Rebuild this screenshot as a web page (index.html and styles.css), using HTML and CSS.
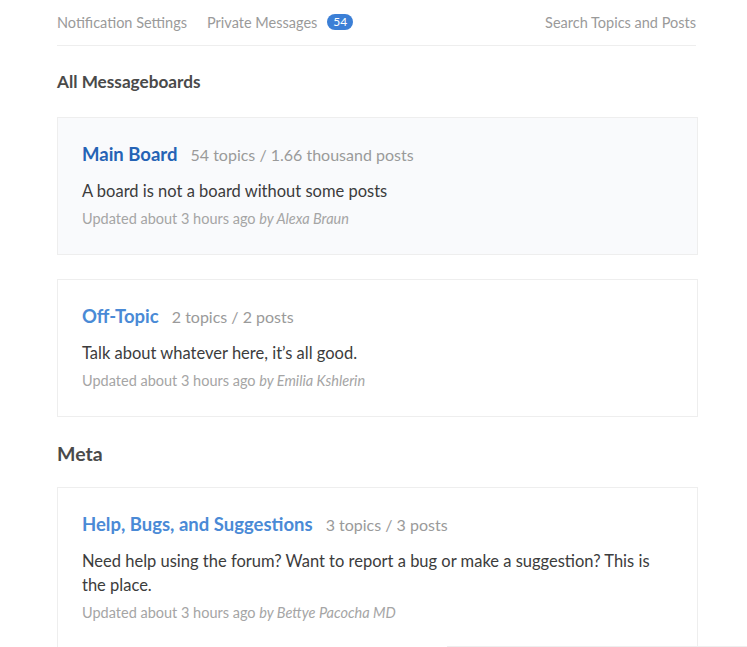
FILE: index.html
```html
<!DOCTYPE html>
<html lang="en">
<head>
<meta charset="utf-8">
<title>Messageboards</title>
<link rel="stylesheet" href="styles.css">
</head>
<body>
<div class="page">
  <nav class="topnav">
    <div class="nav-left">
      <a class="nav-link" href="#">Notification Settings</a>
      <a class="nav-link" href="#">Private Messages <span class="badge">54</span></a>
    </div>
    <a class="nav-link" href="#">Search Topics and Posts</a>
  </nav>

  <h2 class="section-title">All Messageboards</h2>

  <div class="board board-active">
    <div class="board-head">
      <a class="board-name board-name-dark" href="#">Main Board</a>
      <span class="board-stats">54 topics / 1.66 thousand posts</span>
    </div>
    <p class="board-desc">A board is not a board without some posts</p>
    <p class="board-meta">Updated about 3 hours ago <em>by Alexa Braun</em></p>
  </div>

  <div class="board">
    <div class="board-head">
      <a class="board-name" href="#">Off-Topic</a>
      <span class="board-stats">2 topics / 2 posts</span>
    </div>
    <p class="board-desc">Talk about whatever here, it’s all good.</p>
    <p class="board-meta">Updated about 3 hours ago <em>by Emilia Kshlerin</em></p>
  </div>

  <h2 class="section-title section-title-lg">Meta</h2>

  <div class="board">
    <div class="board-head">
      <a class="board-name" href="#">Help, Bugs, and Suggestions</a>
      <span class="board-stats">3 topics / 3 posts</span>
    </div>
    <p class="board-desc">Need help using the forum? Want to report a bug or make a suggestion? This is the place.</p>
    <p class="board-meta">Updated about 3 hours ago <em>by Bettye Pacocha MD</em></p>
  </div>
</div>
<div class="footer-edge"></div>
</body>
</html>
```

FILE: styles.css
```css
html, body {
  margin: 0;
  padding: 0;
  background: #ffffff;
}
body {
  font-family: "Lato", "Open Sans", sans-serif;
  color: #444;
}
.page {
  width: 641px;
  margin-left: 57px;
}
.topnav {
  display: flex;
  justify-content: space-between;
  align-items: center;
  height: 46px;
  border-bottom: 1px solid #eeeeee;
  padding: 0 0 1px;
  width: 639px;
  box-sizing: border-box;
}
.nav-left {
  display: flex;
  gap: 20px;
  align-items: center;
}
.nav-link {
  font-size: 14.5px;
  color: #9a9a9a;
  text-decoration: none;
  display: flex;
  align-items: center;
  gap: 10px;
}
.badge {
  display: inline-block;
  background: #3b7fd6;
  color: #fff;
  font-size: 12px;
  line-height: 16px;
  padding: 0 6px;
  border-radius: 8px;
}
.section-title {
  font-size: 17.2px;
  font-weight: 700;
  color: #4a4a4a;
  margin: 24px 0 23px;
  line-height: 24px;
}
.section-title-lg {
  font-size: 19.5px;
  margin: 25px 0 21px;
}
.board {
  border: 1px solid #eeeeee;
  padding: 24px;
  margin-bottom: 24px;
  background: #fff;
}
.board-active {
  background: #f9fafc;
}
.board-head {
  display: flex;
  align-items: baseline;
  gap: 13px;
  line-height: 24px;
}
.board-name {
  font-size: 18.5px;
  font-weight: 700;
  color: #4a8ad6;
  text-decoration: none;
}
.board-name-dark {
  color: #2563b5;
}
.board-stats {
  font-size: 16px;
  color: #9a9a9a;
}
.board-desc {
  margin: 12px 0 5px;
  font-size: 16.5px;
  line-height: 24px;
  color: #3c3c3c;
  max-width: 575px;
}
.board-meta {
  margin: 0;
  font-size: 14.5px;
  line-height: 22px;
  color: #a5a5a5;
}
.board-meta em {
  font-style: italic;
}
.footer-edge {
  position: fixed;
  left: 447px;
  right: 0;
  bottom: 0;
  height: 1px;
  background: #eeeeee;
}
```
